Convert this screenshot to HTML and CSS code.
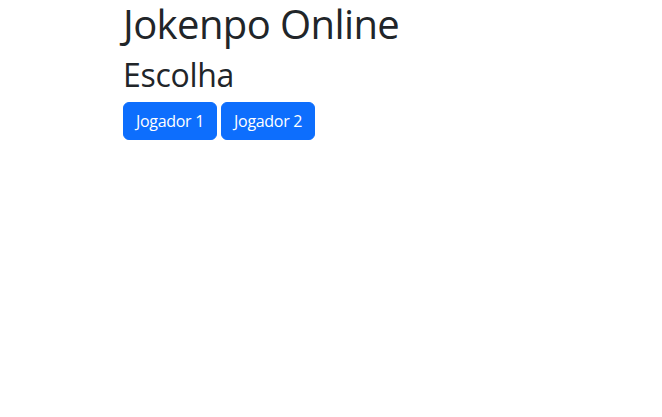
FILE: index.html
```html
<!DOCTYPE html>
<html lang="pt">
<head>
<meta charset="utf-8">
<title>Jokenpo Online</title>
<link rel="stylesheet" href="styles.css">
</head>
<body>
<div class="container">
  <h1 class="title">Jokenpo Online</h1>
  <h2 class="subtitle">Escolha</h2>
  <div class="actions">
    <button class="btn">Jogador 1</button>
    <button class="btn">Jogador 2</button>
  </div>
</div>
</body>
</html>
```
FILE: styles.css
```css
*, *::before, *::after {
  box-sizing: border-box;
}
html, body {
  margin: 0;
  padding: 0;
  background: #fff;
}
body {
  font-family: "Open Sans", "Noto Sans", sans-serif;
  color: #212529;
  font-size: 16px;
  line-height: 1.5;
}
.container {
  max-width: 440px;
  margin: 0 auto;
  padding: 0 12px;
}
.title {
  margin: 0 0 8px;
  font-size: 40px;
  font-weight: 400;
  line-height: 1.2;
  letter-spacing: -0.6px;
}
.subtitle {
  margin: 0 0 8px;
  font-size: 32px;
  font-weight: 400;
  line-height: 1.2;
  letter-spacing: -0.3px;
}
.actions {
  display: flex;
  gap: 4px;
}
.btn {
  font-family: inherit;
  font-size: 16px;
  line-height: 24px;
  padding: 6px 12px;
  color: #fff;
  background: #0d6efd;
  border: 1px solid #0d6efd;
  border-radius: 6px;
  letter-spacing: -0.3px;
  cursor: pointer;
}
```
